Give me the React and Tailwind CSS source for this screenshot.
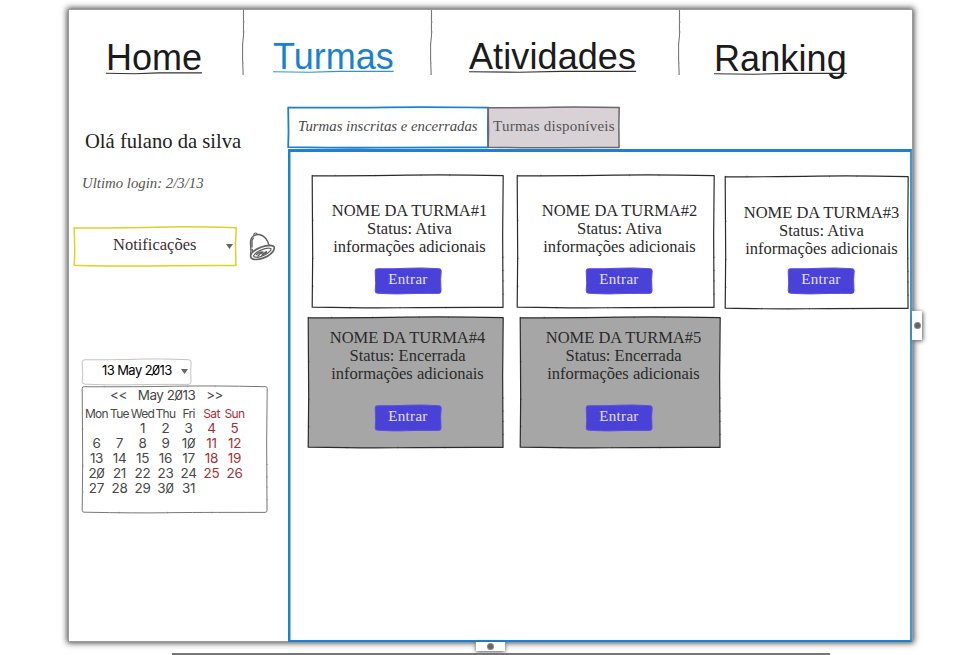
import React from "react";

const SERIF = "font-['Liberation_Serif','Times_New_Roman',serif]";

// Hand-drawn outline stretched over its parent box.
function Outline({ w, h, color, stroke = 1.2, fill = "none", radius = 0, ticks = true, wobble = 0.6 }) {
  const k = wobble;
  const r = radius;
  const d = [
    `M${r} ${0.6 * k}`,
    `Q${w * 0.3} ${0.9 * k} ${w * 0.5} ${-0.3 * k}`,
    `T${w - r} ${0.5 * k}`,
    r ? `Q${w} 0 ${w} ${r}` : "",
    `L${w - 0.9 * k} ${h * 0.45}`,
    `L${w - 0.3 * k} ${h - r}`,
    r ? `Q${w} ${h} ${w - r} ${h}` : "",
    `Q${w * 0.6} ${h - 0.1} ${w * 0.45} ${h + 0.6 * k}`,
    `T${r} ${h - 0.2}`,
    r ? `Q0 ${h} 0 ${h - r}` : "",
    `L${0.8 * k} ${h * 0.6}`,
    `L0 ${r}`,
    r ? `Q0 0 ${r} ${0.6 * k}` : "Z",
  ].join(" ");
  const marks = ticks
    ? [0.62, 0.72, 0.8, 0.9].map((t) => `M${w - 1} ${h * t}h2`).join("") +
      [0.34, 0.63, 0.84].map((t) => `M0 ${h * t}h1.6`).join("") +
      [0.12, 0.33, 0.57, 0.72].map((t) => `M${w * t} ${-0.8}v1.6`).join("") +
      [0.2, 0.46, 0.7].map((t) => `M${w * t} ${h - 0.6}v1.6`).join("")
    : "";
  return (
    <svg
      className="pointer-events-none absolute inset-0 h-full w-full overflow-visible"
      viewBox={`0 0 ${w} ${h}`}
      preserveAspectRatio="none"
      aria-hidden="true"
    >
      <g transform="translate(0.2 0.4)">
        <path d={d} fill={fill} stroke={color} strokeWidth={stroke} strokeLinejoin="round" />
        <path d={marks} stroke={color} strokeWidth="0.7" opacity="0.6" />
      </g>
    </svg>
  );
}

function NavItem({ label, className, line, color, lineWidth }) {
  return (
    <div className={`shrink-0 ${className}`}>
      <a className="relative inline-block whitespace-nowrap text-[36px] leading-[36px]">
        <svg
          className="pointer-events-none absolute left-0 top-0 h-9 w-full overflow-visible"
          viewBox={`0 0 ${lineWidth} 36`}
          preserveAspectRatio="none"
          aria-hidden="true"
        >
          <path
            d={`M0 ${line + 0.3} L${lineWidth * 0.3} ${line + 0.7} L${lineWidth * 0.55} ${line - 0.1} H${lineWidth}`}
            fill="none"
            stroke={color}
            strokeWidth="1.1"
          />
        </svg>
        <span className="relative">{label}</span>
      </a>
    </div>
  );
}

function Divider() {
  return (
    <svg className="h-[65px] w-1 shrink-0" viewBox="0 0 4 65" aria-hidden="true">
      <path d="M2.5 0V26L1.6 34V50L2.2 65" fill="none" stroke="#777" strokeWidth="1.1" />
      <path d="M2 12h2M2 22h2M1 53h2" stroke="#999" strokeWidth="0.6" />
    </svg>
  );
}

function Bell() {
  return (
    <svg className="mt-[5px] ml-[13px] h-[29px] w-[27px]" viewBox="0 0 27 29" fill="none" stroke="#626262" strokeLinecap="round" aria-hidden="true">
      <path d="M1.6 22.5C2.6 17 .8 12 1.8 7.6 2.8 3.5 7.5 2 11 2.8c5 1.2 7.7 5.5 9.2 11" strokeWidth="1.4" />
      <path d="M4.8 3.4C4.5 1.5 6 .7 7.3 1.2l1 1.2" strokeWidth="1.1" />
      <path d="M3 8v7M4.3 6l-.8 1.5M3.2 17.5l.4 1.5" strokeWidth="1.4" />
      <path d="M2 22.5C4.5 17 18.5 11.5 24.5 14.3c1.5 1 .6 3.5-.6 5.2C19.5 25.5 9 28.8 3.6 26.9 1.6 26 1.2 24.2 2 22.5Z" strokeWidth="1.7" />
      <path d="M4.5 24C6.5 19.8 16.5 15 21.8 16.5c1.2 1-2.3 4.5-5.8 6.3-4.2 2.2-9.3 3.3-11.5 1.2Z" strokeWidth="1.2" />
      <path d="M7.5 22.5c2-2 4.5-2.8 6.5-2.3M9 24l3-3.2 1.8 1.5 3.5-2.8M13 23.3l4.5-3" strokeWidth="1.4" />
    </svg>
  );
}

function Caret({ className }) {
  return (
    <svg className={`h-[5px] w-[7px] ${className}`} viewBox="0 0 7 5" aria-hidden="true">
      <path d="M0 0h7L3.5 5Z" fill="#666" />
    </svg>
  );
}

// Digits with the struck-through zero of the calendar's lettering.
function Slashed({ text }) {
  return String(text)
    .split("")
    .map((c, i) =>
      c === "0" ? (
        <span
          key={i}
          className="relative after:absolute after:left-[45%] after:top-[10%] after:h-[80%] after:w-px after:rotate-[35deg] after:bg-current after:content-['']"
        >
          0
        </span>
      ) : (
        c
      )
    );
}

function ClassCard({ name, status, w, h, box, text, button, closed }) {
  return (
    <article className={`relative shrink-0 ${box}`}>
      <Outline w={w} h={h} color="#2b2b2b" fill={closed ? "#a6a6a6" : "#fff"} />
      <div className={`relative w-[157px] whitespace-nowrap text-center text-[16.5px] leading-[18px] text-[#2a2a2a] ${text}`}>
        <h3>{name}</h3>
        <p>Status: {status}</p>
        <p>informações adicionais</p>
      </div>
      <button
        className={`relative block h-[25px] w-[66px] rounded-[3px] text-center text-[15px] tracking-[0.3px] text-[#e4e0f4] ${
          closed ? "leading-[22px]" : "leading-[20px]"
        } ${button}`}
      >
        <Outline w={66} h={25} radius={2.5} color="#5a50e0" stroke={1} fill="#4a42d8" ticks={false} />
        <span className="relative -top-[2px]">Entrar</span>
      </button>
    </article>
  );
}

const DAYS = ["Mon", "Tue", "Wed", "Thu", "Fri", "Sat", "Sun"];
const WEEKS = [
  ["", "", 1, 2, 3, 4, 5],
  [6, 7, 8, 9, 10, 11, 12],
  [13, 14, 15, 16, 17, 18, 19],
  [20, 21, 22, 23, 24, 25, 26],
  [27, 28, 29, 30, 31, "", ""],
];

function Calendar() {
  return (
    <div className="ml-[13px] font-['Inter',sans-serif]">
      <div className="relative flex h-[25px] w-[109px] items-center">
        <Outline w={109} h={25} radius={3} color="#c4c4c4" stroke={1} ticks={false} />
        <span className="relative -mt-[3px] ml-5 w-[70px] whitespace-nowrap text-[13px] leading-5 tracking-[-0.6px] text-black">
          <Slashed text="13 May 2013" />
        </span>
        <Caret className="relative ml-[9px]" />
      </div>
      <div className="relative mt-[2px] h-[126px] w-[185px] text-[#484848]">
        <Outline w={185} h={126} radius={2} color="#777" stroke={1} />
        <div className="relative ml-7 flex h-[18px] w-[113px] justify-between whitespace-nowrap text-[13.5px] leading-[18px]">
          <span className="tracking-[-0.5px]">&lt;&lt;</span>
          <span className="tracking-[-0.5px]"><Slashed text="May 2013" /></span>
          <span className="tracking-[-0.5px]">&gt;&gt;</span>
        </div>
        <div className="relative ml-[3px] mt-[2px] grid w-[161px] grid-cols-7 text-center text-[12px] leading-[15px] tracking-[-0.7px]">
          {DAYS.map((d, i) => (
            <span key={d} className={`flex justify-center ${i > 4 ? "text-[#a5313b]" : ""}`}>{d}</span>
          ))}
        </div>
        <div className="relative ml-[3px] grid w-[161px] grid-cols-7 text-center text-[13.5px] leading-[15px] tracking-[-0.3px]">
          {WEEKS.flat().map((n, i) => (
            <span key={i} className={i % 7 > 4 ? "text-[#a5313b]" : ""}><Slashed text={n} /></span>
          ))}
        </div>
      </div>
    </div>
  );
}

export default function App() {
  return (
    <div className={`relative h-[655px] w-[963px] overflow-hidden bg-white pl-[69px] pt-[10px] ${SERIF}`}>
      <div className="h-[631px] w-[843px] bg-white shadow-[0_0_0_1px_#9a9a9a,0_0_6px_2px_#444]">
        <nav className="flex h-[97px] font-['Liberation_Sans',Arial,sans-serif] text-[#1b1b1b]">
          <NavItem label="Home" className="w-[172px] pl-[37px] pt-[30px]" line={33} color="#333" lineWidth={96} />
          <Divider />
          <NavItem label="Turmas" className="w-[184px] pl-[28px] pt-[29px] text-[#1b7fd3]" line={32.5} color="#2b94dc" lineWidth={120} />
          <Divider />
          <NavItem label="Atividades" className="w-[244px] pl-[36px] pt-[29px] tracking-[0.1px]" line={32.5} color="#333" lineWidth={167} />
          <Divider />
          <NavItem label="Ranking" className="w-[231px] pl-[33px] pt-[31px] tracking-[0.1px]" line={32.5} color="#333" lineWidth={133} />
        </nav>

        <div className="flex h-[534px]">
          <aside className="w-[219px] shrink-0 pt-[22px]">
            <h1 className="ml-4 whitespace-nowrap text-[20.6px] leading-6 text-[#222]">Olá fulano da silva</h1>
            <p className="ml-[13px] mt-[21px] whitespace-nowrap text-[14.8px] italic leading-[18px] text-[#555]">Ultimo login: 2/3/13</p>
            <div className="mt-[35px] flex">
              <div className="relative ml-[5px] flex h-[38px] w-[162px] items-center">
                <Outline w={162} h={38} color="#d9d22a" stroke={1.5} ticks={false} wobble={0.8} />
                <span className="relative -mt-[3px] ml-[39px] w-[84px] whitespace-nowrap text-[16.5px] leading-5 text-[#3a3033]">Notificações</span>
                <Caret className="relative ml-[29px]" />
              </div>
              <Bell />
            </div>
            <div className="mt-[94px]">
              <Calendar />
            </div>
          </aside>

          <main className="w-[624px] shrink-0">
            <div className="flex h-[42px]">
              <div className="relative h-[40px] w-[200px] whitespace-nowrap pl-[10px] text-[14.8px] italic leading-[38px] text-[#4a4a4a]">
                <span className="relative">Turmas inscritas e encerradas</span>
                <Outline w={200} h={40} color="#1b7fd3" stroke={1.8} ticks={false} wobble={0.4} />
              </div>
              <div className="relative h-[40px] w-[131px] whitespace-nowrap pl-[5px] text-[15px] leading-[38px] tracking-[0.25px] text-[#555]">
                <Outline w={131} h={40} color="#6b696b" stroke={1.5} fill="#d8d1d6" ticks={false} wobble={0.4} />
                <span className="relative">Turmas disponíveis</span>
              </div>
            </div>
            <section className="h-[493px] w-[624px] border-b-2 border-l-2 border-r-2 border-t-[3px] border-[#1f80d0] border-r-[#3d9ad8] pt-[23px] shadow-[inset_1px_0_0_#8cc4f0]">
              <div className="flex items-start">
                <ClassCard name="NOME DA TURMA#1" status="Ativa" w={191} h={132} box="ml-[22px] h-[132px] w-[191px] pt-[27px]" text="ml-[19px]" button="ml-[63px] mt-[12px]" />
                <ClassCard name="NOME DA TURMA#2" status="Ativa" w={197} h={132} box="ml-[14px] h-[132px] w-[197px] pt-[27px]" text="ml-[24px]" button="ml-[69px] mt-[12px]" />
                <ClassCard name="NOME DA TURMA#3" status="Ativa" w={183} h={132} box="ml-[11px] mt-px h-[132px] w-[183px] pt-[28px]" text="ml-[18px]" button="ml-[63px] mt-[10px]" />
              </div>
              <div className="mt-[9px] flex items-start">
                <ClassCard closed name="NOME DA TURMA#4" status="Encerrada" w={195} h={130} box="ml-[18px] h-[130px] w-[195px] pt-[12px]" text="ml-[21px]" button="ml-[67px] mt-[22px]" />
                <ClassCard closed name="NOME DA TURMA#5" status="Encerrada" w={200} h={130} box="ml-[17px] h-[130px] w-[200px] pt-[12px]" text="ml-[25px]" button="ml-[66px] mt-[22px]" />
              </div>
            </section>
          </main>
        </div>
      </div>

      {/* Resize handles over the window edge */}
      <div className="absolute left-[912px] top-[311px] flex h-[29px] w-[10px] items-center justify-center bg-white shadow-[1px_1px_4px_#555]">
        <span className="size-[5px] rounded-full bg-[#666] ring-1 ring-[#888]" />
      </div>
      <div className="absolute left-[476px] top-[642px] flex h-[9px] w-[29px] items-center justify-center bg-white shadow-[0_1px_4px_#555]">
        <span className="size-[5px] rounded-full bg-[#666] ring-1 ring-[#888]" />
      </div>
      <div className="absolute left-[172px] top-[653px] h-[2px] w-[658px] bg-[#777]" />
    </div>
  );
}
